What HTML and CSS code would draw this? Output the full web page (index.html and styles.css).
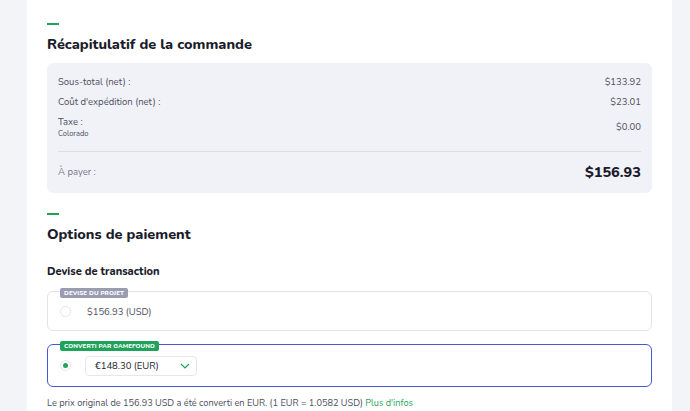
FILE: index.html
```html
<!doctype html>
<html lang="fr">
  <head>
    <meta charset="UTF-8" />
    <meta name="viewport" content="width=device-width, initial-scale=1.0" />
    <title>Récapitulatif de la commande</title>
    <link rel="stylesheet" href="styles.css">
  </head>
  <body>
    <div class="page">
      <div class="panel">
        <div class="accent"></div>
        <h2 class="section-title">Récapitulatif de la commande</h2>
        <div class="summary">
          <div class="row">
            <span class="label">Sous-total (net) :</span>
            <span class="value">$133.92</span>
          </div>
          <div class="row">
            <span class="label">Coût d'expédition (net) :</span>
            <span class="value">$23.01</span>
          </div>
          <div class="row">
            <div class="label">
              Taxe :
              <div class="sub">Colorado</div>
            </div>
            <span class="value">$0.00</span>
          </div>
          <div class="row total">
            <span class="label">À payer :</span>
            <span class="value">$156.93</span>
          </div>
        </div>

        <div class="accent"></div>
        <h2 class="section-title">Options de paiement</h2>
        <h3 class="subtitle">Devise de transaction</h3>

        <div class="option">
          <span class="badge badge-grey">DEVISE DU PROJET</span>
          <span class="radio"></span>
          <span class="amount">$156.93 (USD)</span>
        </div>

        <div class="option selected">
          <span class="badge badge-green">CONVERTI PAR GAMEFOUND</span>
          <span class="radio checked"></span>
          <div class="select">
            <span>€148.30 (EUR)</span>
            <svg width="10" height="6" viewBox="0 0 10 6">
              <path d="M1 1l4 4 4-4" fill="none" stroke="#1fa35a" stroke-width="1.2" />
            </svg>
          </div>
        </div>

        <p class="note">
          Le prix original de 156.93 USD a été converti en EUR. (1 EUR = 1.0582 USD)
          <a href="#">Plus d'infos</a>
        </p>
      </div>
    </div>
  </body>
</html>
```

FILE: styles.css
```css
body {
  margin: 0;
  background: #f3f4f8;
  font-family: "Nunito", Lato, "Noto Sans", sans-serif;
  color: #1b1c2b;
}
.page {
  padding: 0 18px 0 27px;
  height: 411px;
  overflow: hidden;
}
.panel {
  background: #fff;
  padding: 23px 20px 0 20px;
  height: 100%;
}
.accent {
  width: 12px;
  height: 2px;
  background: #1fa35a;
}
.section-title {
  font-size: 14.5px;
  font-weight: 800;
  margin: 9px 0 9px;
  line-height: 20px;
}
.summary {
  background: #f1f2f7;
  border-radius: 6px;
  padding: 9px 11px 11px;
  margin-bottom: 20px;
}
.row {
  display: flex;
  justify-content: space-between;
  align-items: center;
  font-size: 9.5px;
  line-height: 14px;
  padding: 3px 0;
  color: #4d4e5e;
}
.sub {
  font-size: 7.5px;
  line-height: 10px;
}
.row.total {
  border-top: 1px solid #dcdde6;
  margin-top: 9px;
  padding-top: 13px;
}
.row.total .label {
  color: #77788a;
}
.row.total .value {
  font-size: 14.5px;
  font-weight: 800;
  color: #1b1c2b;
}
.subtitle {
  font-size: 11px;
  font-weight: 800;
  margin: 20px 0 12px;
}
.option {
  position: relative;
  display: flex;
  align-items: center;
  gap: 16px;
  height: 38px;
  padding: 0 12px;
  border: 1.5px solid #e3e3ee;
  border-radius: 6px;
  margin-bottom: 13px;
  font-size: 9.5px;
  color: #4d4e5e;
}
.option.selected {
  border-color: #4657d8;
  height: 41px;
}
.badge {
  position: absolute;
  top: -4px;
  left: 12px;
  font-size: 6.2px;
  font-weight: 800;
  letter-spacing: 0.1px;
  color: #fff;
  padding: 2px 4px;
  border-radius: 2px;
  line-height: 6px;
}
.badge-grey {
  background: #9a9cb2;
}
.badge-green {
  background: #1fa35a;
}
.radio {
  width: 11px;
  height: 11px;
  border: 1px solid #e3e3ee;
  border-radius: 50%;
  box-sizing: border-box;
  display: flex;
  align-items: center;
  justify-content: center;
}
.radio.checked::after {
  content: "";
  width: 5px;
  height: 5px;
  border-radius: 50%;
  background: #1fa35a;
}
.select {
  display: flex;
  align-items: center;
  justify-content: space-between;
  width: 112px;
  height: 20px;
  box-sizing: border-box;
  padding: 0 6px 0 9px;
  border: 1px solid #e6e6ef;
  border-radius: 4px;
  margin-left: -2px;
  color: #1b1c2b;
}
.note {
  font-size: 9.2px;
  color: #4d4e5e;
  margin: -3px 0 0;
}
.note a {
  color: #1fa35a;
  text-decoration: none;
}
```
